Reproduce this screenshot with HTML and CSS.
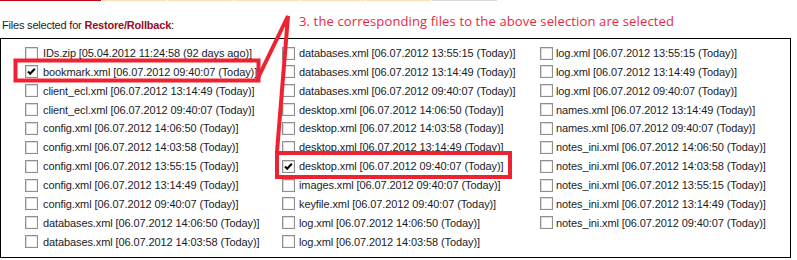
FILE: index.html
```html
<!DOCTYPE html>
<html>
<head>
<meta charset="utf-8">
<link rel="stylesheet" href="styles.css">
</head>
<body>
<div class="tabs">
  <span class="tab tab-active"></span>
  <span class="tab"></span>
  <span class="tab"></span>
  <span class="tab"></span>
  <span class="tab"></span>
  <span class="tab"></span>
  <span class="tab tab-off"></span>
</div>
<p class="label">Files selected for <b>Restore/Rollback</b>:</p>
<div class="box">
  <ul class="col col1">
    <li><span class="cb"></span>IDs.zip [05.04.2012 11:24:58 (92 days ago)]</li>
    <li><span class="cb on"><svg viewBox="0 0 13 13"><polyline points="3,6.5 5.2,8.8 9.8,3.8"/></svg></span>bookmark.xml [06.07.2012 09:40:07 (Today)]</li>
    <li><span class="cb"></span>client_ecl.xml [06.07.2012 13:14:49 (Today)]</li>
    <li><span class="cb"></span>client_ecl.xml [06.07.2012 09:40:07 (Today)]</li>
    <li><span class="cb"></span>config.xml [06.07.2012 14:06:50 (Today)]</li>
    <li><span class="cb"></span>config.xml [06.07.2012 14:03:58 (Today)]</li>
    <li><span class="cb"></span>config.xml [06.07.2012 13:55:15 (Today)]</li>
    <li><span class="cb"></span>config.xml [06.07.2012 13:14:49 (Today)]</li>
    <li><span class="cb"></span>config.xml [06.07.2012 09:40:07 (Today)]</li>
    <li><span class="cb"></span>databases.xml [06.07.2012 14:06:50 (Today)]</li>
    <li><span class="cb"></span>databases.xml [06.07.2012 14:03:58 (Today)]</li>
  </ul>
  <ul class="col col2">
    <li><span class="cb"></span>databases.xml [06.07.2012 13:55:15 (Today)]</li>
    <li><span class="cb"></span>databases.xml [06.07.2012 13:14:49 (Today)]</li>
    <li><span class="cb"></span>databases.xml [06.07.2012 09:40:07 (Today)]</li>
    <li><span class="cb"></span>desktop.xml [06.07.2012 14:06:50 (Today)]</li>
    <li><span class="cb"></span>desktop.xml [06.07.2012 14:03:58 (Today)]</li>
    <li><span class="cb"></span>desktop.xml [06.07.2012 13:14:49 (Today)]</li>
    <li><span class="cb on"><svg viewBox="0 0 13 13"><polyline points="3,6.5 5.2,8.8 9.8,3.8"/></svg></span>desktop.xml [06.07.2012 09:40:07 (Today)]</li>
    <li><span class="cb"></span>images.xml [06.07.2012 09:40:07 (Today)]</li>
    <li><span class="cb"></span>keyfile.xml [06.07.2012 09:40:07 (Today)]</li>
    <li><span class="cb"></span>log.xml [06.07.2012 14:06:50 (Today)]</li>
    <li><span class="cb"></span>log.xml [06.07.2012 14:03:58 (Today)]</li>
  </ul>
  <ul class="col col3">
    <li><span class="cb"></span>log.xml [06.07.2012 13:55:15 (Today)]</li>
    <li><span class="cb"></span>log.xml [06.07.2012 13:14:49 (Today)]</li>
    <li><span class="cb"></span>log.xml [06.07.2012 09:40:07 (Today)]</li>
    <li><span class="cb"></span>names.xml [06.07.2012 13:14:49 (Today)]</li>
    <li><span class="cb"></span>names.xml [06.07.2012 09:40:07 (Today)]</li>
    <li><span class="cb"></span>notes_ini.xml [06.07.2012 14:06:50 (Today)]</li>
    <li><span class="cb"></span>notes_ini.xml [06.07.2012 14:03:58 (Today)]</li>
    <li><span class="cb"></span>notes_ini.xml [06.07.2012 13:55:15 (Today)]</li>
    <li><span class="cb"></span>notes_ini.xml [06.07.2012 13:14:49 (Today)]</li>
    <li><span class="cb"></span>notes_ini.xml [06.07.2012 09:40:07 (Today)]</li>
  </ul>
</div>
<p class="note">3. the corresponding files to the above selection are selected</p>
<svg class="marks" width="797" height="260" viewBox="0 0 797 260">
  <rect x="15.5" y="60.5" width="243" height="20" />
  <rect x="277" y="153" width="233" height="24" />
  <polyline points="257,80 288,16 277,152" />
</svg>
</body>
</html>
```
FILE: styles.css
```css
* { box-sizing: border-box; }
html, body { margin: 0; padding: 0; background: #fff; }
body {
  position: relative;
  width: 797px;
  height: 260px;
  overflow: hidden;
  font-family: "Liberation Sans", Arial, sans-serif;
  font-size: 11px;
  color: #1b1b26;
}
.tabs {
  display: flex;
  gap: 1px;
  height: 1px;
}
.tab { width: 65px; background: #fbe0b8; }
.tab-active { width: 101px; background: #c0000e; }
.tab-off { background: #d9d9d9; }
.label {
  margin: 18px 0 6px 2px;
  line-height: 13px;
  height: 13px;
  letter-spacing: -0.2px;
  color: #1b1b26;
}
.label b { color: #990a1e; }
.box {
  width: 791px;
  height: 220px;
  border: 1px solid #000;
  display: grid;
  grid-template-columns: 257px 258px 1fr;
  padding: 4.6px 0 0 24px;
  letter-spacing: -0.1px;
}
.col { list-style: none; margin: 0; padding: 0; }
.col li {
  height: 18.86px;
  display: flex;
  align-items: center;
  white-space: nowrap;
}
.cb {
  flex: none;
  width: 13px;
  height: 13px;
  margin-right: 5px;
  border: 1px solid #8f8f8f;
  background: #fff;
  box-shadow: inset 1px 1px 0 #dcdcdc, inset -1px -1px 0 #f2f2f2;
  position: relative;
}
.cb svg { position: absolute; left: -1px; top: -1px; width: 13px; height: 13px; }
.cb polyline { fill: none; stroke: #000; stroke-width: 2; }
.col3 .cb { margin-right: 3px; }
.col2 .cb { margin-right: 4px; }
.note {
  position: absolute;
  left: 299px;
  top: 12px;
  margin: 0;
  font-family: "Open Sans", "Noto Sans", sans-serif;
  font-size: 13px;
  line-height: 18px;
  letter-spacing: 0.13px;
  color: #e8283f;
}
.marks { position: absolute; left: 0; top: 0; }
.marks rect, .marks polyline {
  fill: none;
  stroke: #ee2230;
  stroke-width: 4;
  stroke-linejoin: miter;
}
```
